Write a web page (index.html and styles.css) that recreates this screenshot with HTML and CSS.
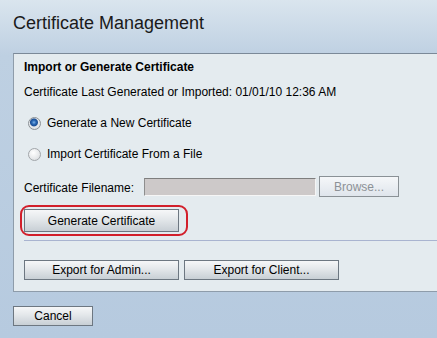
FILE: index.html
```html
<!DOCTYPE html>
<html lang="en">
<head>
  <meta charset="UTF-8">
  <title>Certificate Management</title>
  <link rel="stylesheet" href="styles.css">
</head>
<body>

  <h1>Certificate Management</h1>

  <div class="panel">
    <div class="row head">Import or Generate Certificate</div>
    <div class="row info">Certificate Last Generated or Imported: 01/01/10 12:36 AM</div>

    <label class="row option">
      <span class="radio checked"></span>
      Generate a New Certificate
    </label>
    <label class="row option">
      <span class="radio"></span>
      Import Certificate From a File
    </label>

    <div class="file-row">
      <span class="file-label">Certificate Filename:</span>
      <span class="file-input"></span>
      <button class="btn btn-browse" disabled>Browse...</button>
    </div>

    <div class="gen-row">
      <button class="btn btn-wide highlight">Generate Certificate</button>
    </div>

    <div class="sep"></div>

    <div class="export-row">
      <button class="btn btn-wide">Export for Admin...</button>
      <button class="btn btn-wide">Export for Client...</button>
    </div>
  </div>

  <button class="btn btn-cancel">Cancel</button>

</body>
</html>
```

FILE: styles.css
```css
html, body {
  height: 100%;
}

body {
  margin: 0;
  padding: 0 0 0 13px;
  font-family: 'Liberation Sans', Arial, sans-serif;
  font-size: 12px;
  color: #000;
  background: linear-gradient(#dae5ee 0, #bed0e2 55px, #b6cadf 100%);
  overflow: hidden;
}

h1 {
  margin: 12px 0 19px;
  font-size: 18px;
  font-weight: normal;
  line-height: 22px;
  color: #1a1a1a;
}

/* panel runs into the right edge of the window, so no right border */
.panel {
  padding: 0 0 11px 10px;
  background-color: #e4ebef;
  border: 1px solid #8e9caa;
  border-top-color: #7b8998;
  border-right: none;
}

.row {
  height: 16px;
  line-height: 16px;
  white-space: nowrap;
}

.head {
  margin-top: 5px;
  font-weight: bold;
}

.info {
  margin-top: 9px;
}

.option {
  display: flex;
  align-items: center;
  margin-top: 15px;
  padding-left: 4px;
}

.radio {
  width: 11px;
  height: 11px;
  margin-right: 6px;
  border: 1px solid #a2a6aa;
  border-radius: 50%;
  background: radial-gradient(circle at 40% 35%, #ffffff 0, #e6e8ea 60%, #cfd3d6 100%);
}

.radio.checked {
  border-color: #8b9196;
  background: radial-gradient(circle at 45% 40%, #7fb2e8 0, #2a69b5 2px, #1d4f95 3.5px, #e8eaec 4.5px, #d3d7da 100%);
}

.file-row {
  display: flex;
  align-items: center;
  margin-top: 14px;
  height: 21px;
}

.file-label {
  width: 120px;
  padding-top: 3px;
}

.file-input {
  width: 170px;
  height: 16px;
  background-color: #cdc9c9;
  border: 1px solid;
  border-color: #7e7e7e #f4f4f4 #f6f6f6 #8e8e8e;
}

.btn {
  height: 20px;
  padding: 0;
  font-family: 'Liberation Sans', Arial, sans-serif;
  font-size: 12px;
  color: #000;
  border: 1px solid #6d7781;
  background: linear-gradient(#f6f7f8, #e3e7ea 45%, #c8cfd5);
  cursor: pointer;
}

.btn-browse {
  width: 80px;
  height: 21px;
  margin-left: 3px;
  color: #8c9196;
  border-color: #8a9196;
  background: linear-gradient(#f5f7f9, #dfe5ec);
  cursor: default;
}

.btn-wide {
  width: 155px;
}

.gen-row {
  margin-top: 12px;
}

.highlight {
  position: relative;
  height: 23px;
}

.highlight::after {
  content: "";
  position: absolute;
  left: -5px;
  top: -5px;
  right: -10px;
  bottom: -5px;
  border: 2px solid #d21f2b;
  border-radius: 9px;
}

.sep {
  height: 1px;
  margin-top: 8px;
  background-color: #a9b4d0;
}

.export-row {
  display: flex;
  gap: 5px;
  margin-top: 19px;
}

.btn-cancel {
  width: 80px;
  margin-top: 14px;
}
```
